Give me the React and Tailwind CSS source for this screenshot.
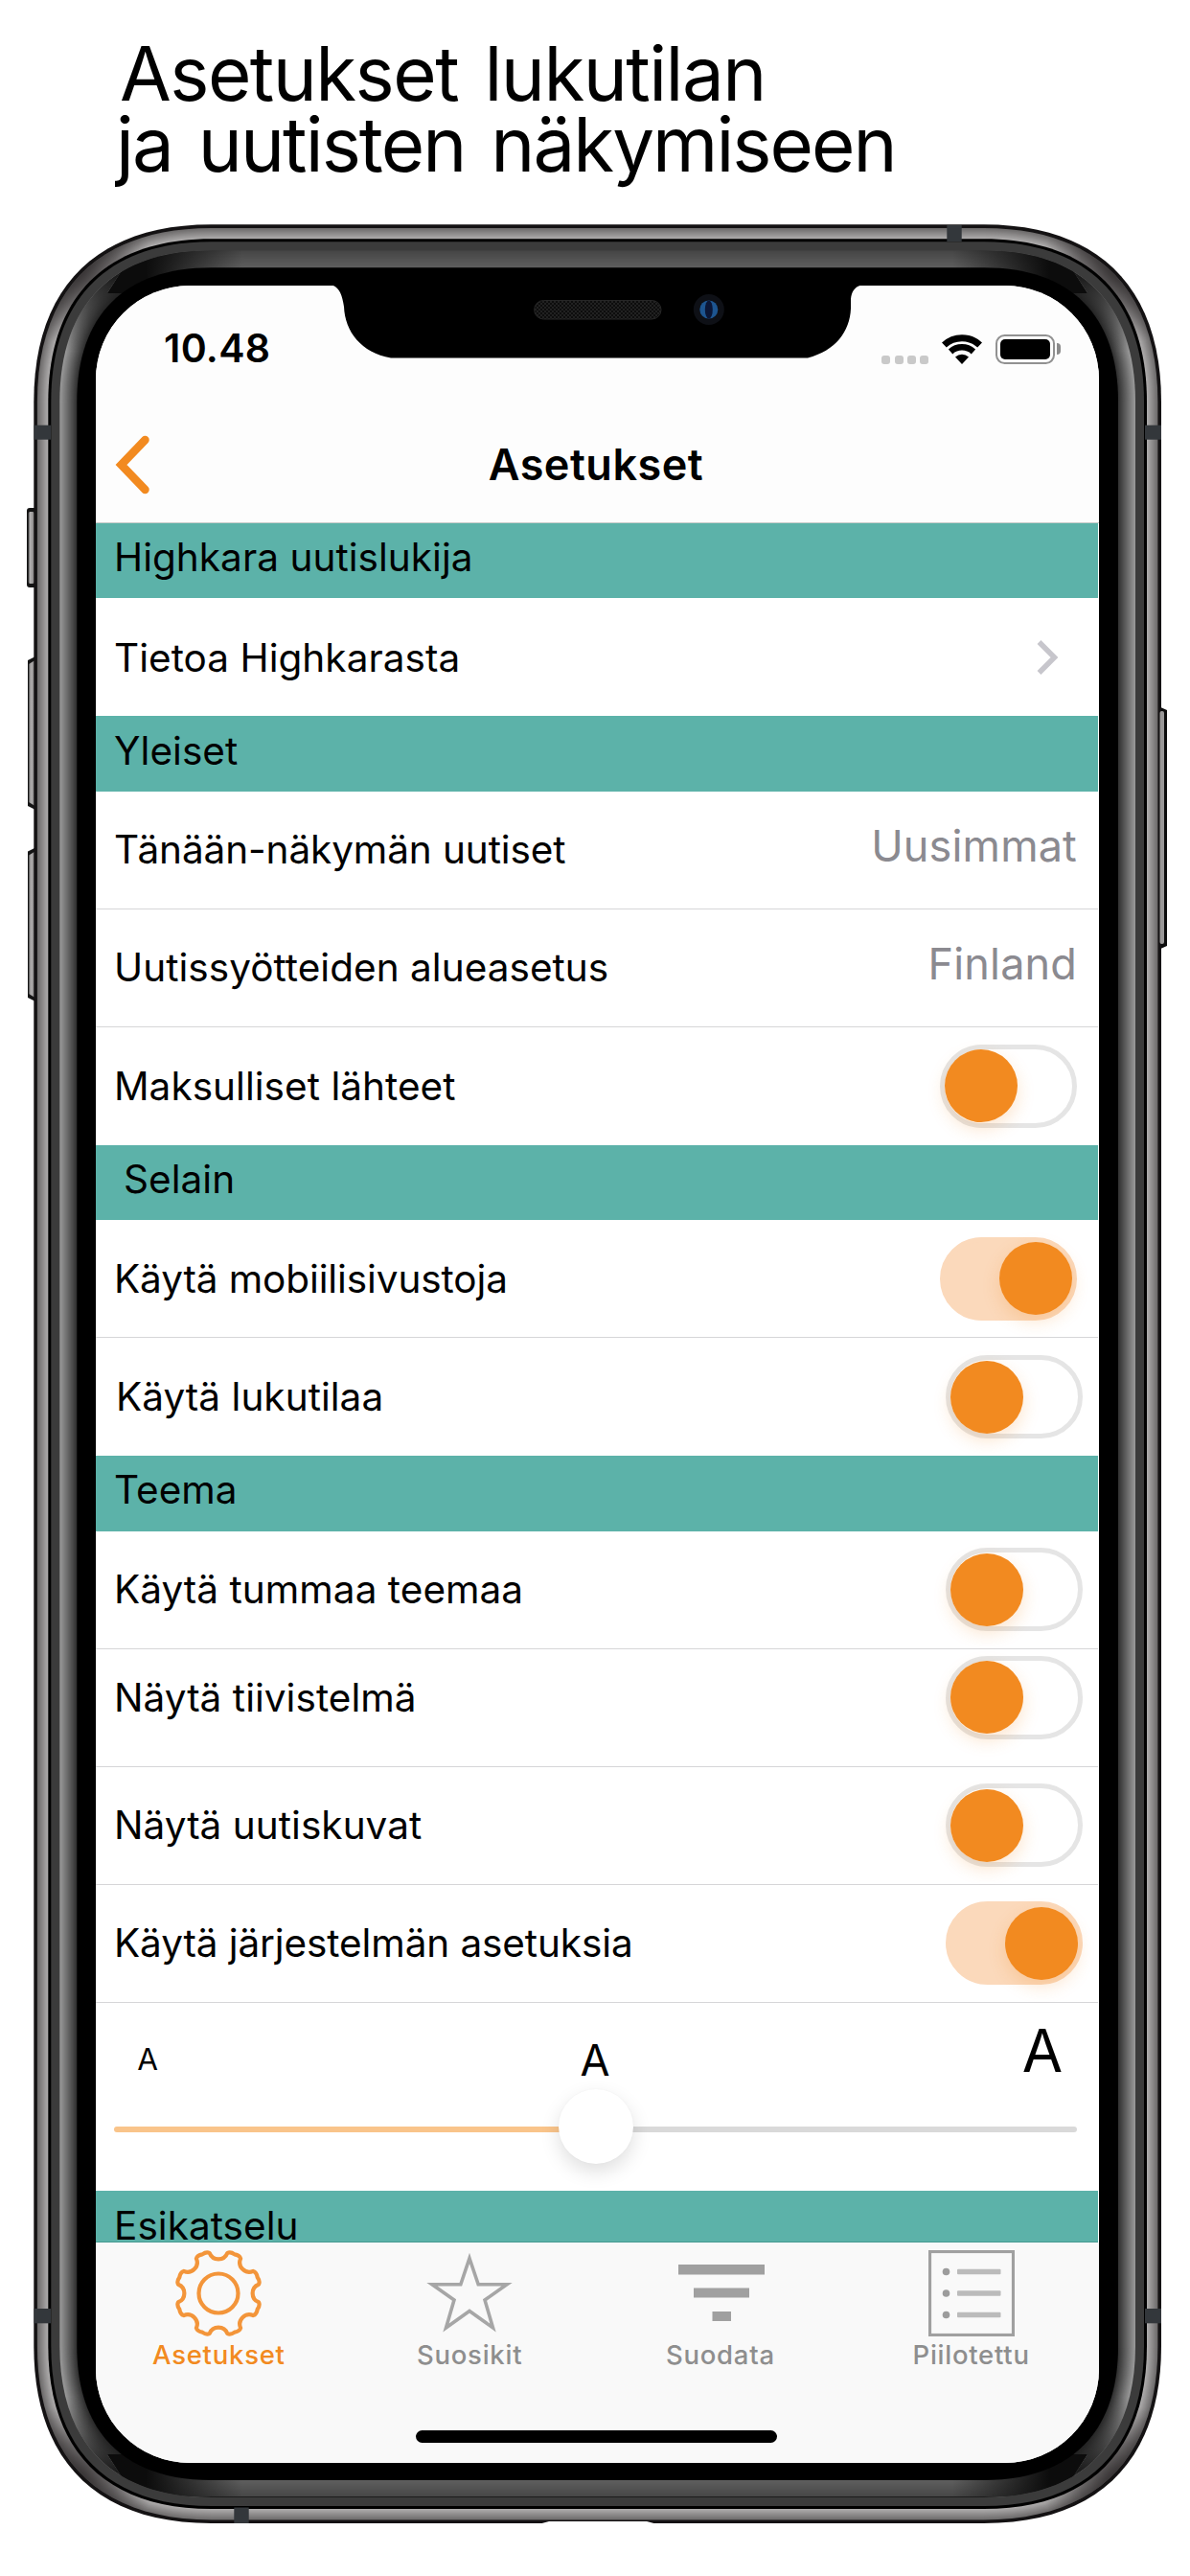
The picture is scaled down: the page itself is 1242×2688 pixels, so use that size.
import React from "react";

/* ---------- phone body drawing ---------- */

const BODY = { left: 35.3, top: 234.3, right: 1212, bottom: 2633 };

function shell(d) {
  const l = BODY.left + d;
  const t = BODY.top + d;
  const r = BODY.right - d;
  const b = BODY.bottom - d;
  const c = 185 - d;
  const k = c * 0.355;
  return [
    `M${l + c} ${t}H${r - c}`,
    `C${r - k} ${t} ${r} ${t + k} ${r} ${t + c}`,
    `V${b - c}`,
    `C${r} ${b - k} ${r - k} ${b} ${r - c} ${b}`,
    `H${l + c}`,
    `C${l + k} ${b} ${l} ${b - k} ${l} ${b - c}`,
    `V${t + c}`,
    `C${l} ${t + k} ${l + k} ${t} ${l + c} ${t}Z`,
  ].join("");
}

const grey = (v, warm = 0) => `rgb(${Math.round(v + warm)},${Math.round(v)},${Math.round(v)})`;

const RIM = Array.from({ length: 12 }, (_, i) => ({ d: 3.6 + i, fill: grey(108 + i * 6, 2) }));
const SIDE = Array.from({ length: 19 }, (_, i) => ({ d: 27 + i, fill: grey(152 - i * 6) }));
const CAP = Array.from({ length: 19 }, (_, i) => ({ d: 27 + i, fill: grey(70 + i * 1.4) }));

const corners = [
  [80, 280],
  [1167, 280],
  [80, 2588],
  [1167, 2588],
];

function PhoneBody() {
  return (
    <svg className="absolute left-0 top-0 h-[2454px] w-[1242px]" viewBox="0 234 1242 2454">
      <defs>
        <radialGradient id="cornerShade">
          <stop offset="0" stopColor="#2b2728" stopOpacity="0.85" />
          <stop offset="0.5" stopColor="#2b2728" stopOpacity="0.5" />
          <stop offset="1" stopColor="#2b2728" stopOpacity="0" />
        </radialGradient>
        <linearGradient id="capShade">
          <stop offset="0.08" stopColor="#0c0c0c" />
          <stop offset="0.17" stopColor="#0c0c0c" stopOpacity="0" />
          <stop offset="0.83" stopColor="#0c0c0c" stopOpacity="0" />
          <stop offset="0.92" stopColor="#0c0c0c" />
        </linearGradient>
        <linearGradient id="sideShade" x2="0" y2="1">
          <stop offset="0.012" stopColor="#1c1c1c" />
          <stop offset="0.045" stopColor="#1c1c1c" stopOpacity="0" />
          <stop offset="0.955" stopColor="#1c1c1c" stopOpacity="0" />
          <stop offset="0.988" stopColor="#1c1c1c" />
        </linearGradient>
        <linearGradient id="key" x2="1">
          <stop offset="0" stopColor="#4a4a4a" />
          <stop offset="0.3" stopColor="#b0aeae" />
          <stop offset="0.6" stopColor="#a09e9e" />
          <stop offset="1" stopColor="#7c7a7a" />
        </linearGradient>
        <clipPath id="caps">
          <path d="M140 262H1107L1135 306H112ZM140 2605H1107L1135 2561H112Z" />
          <path d="M150 234H1092V262H1107V308H140V262H150ZM150 2640H1092V2605H140V2560H1107V2605H1092Z" />
        </clipPath>
        <pattern id="mesh" width="4" height="4" patternUnits="userSpaceOnUse">
          <rect width="4" height="4" fill="#0d0d0d" />
          <circle cx="1" cy="1" r="0.9" fill="#2b2b2b" />
          <circle cx="3" cy="3" r="0.9" fill="#2b2b2b" />
        </pattern>
      </defs>

      <rect x="28" y="530" width="12" height="83" rx="3" fill="#141414" />
      <rect x="29.500" y="534" width="6.500" height="75" rx="2" fill="url(#key)" />
      <path d="M29 689L37 685V845L29 841Z" fill="#141414" />
      <path d="M30 693L36.500 689V841L30 837Z" fill="url(#key)" />
      <path d="M29 888.500L37 884.500V1045L29 1041Z" fill="#141414" />
      <path d="M30 892.500L36.500 888.500V1041L30 1037Z" fill="url(#key)" />
      <path d="M1209 737L1218 741V987L1209 991Z" fill="#0c0c0c" />
      <path d={shell(0)} fill="#141213" />
      {RIM.map((r) => (
        <path key={r.d} d={shell(r.d)} fill={r.fill} />
      ))}
      <clipPath id="rimArea">
        <path d={shell(3.6)} />
      </clipPath>
      <g clipPath="url(#rimArea)">
        {corners.map(([x, y]) => (
          <circle key={`${x}-${y}`} cx={x} cy={y} r="80" fill="url(#cornerShade)" />
        ))}
      </g>
      <path d={shell(15)} fill="#000" />
      <path d={shell(18)} fill="#3b3b3b" />
      {SIDE.map((r) => (
        <path key={r.d} d={shell(r.d)} fill={r.fill} />
      ))}
      <path d={shell(27)} fill="url(#sideShade)" />
      <g clipPath="url(#caps)">
        {CAP.map((r) => (
          <path key={r.d} d={shell(r.d)} fill={r.fill} />
        ))}
        <path d={shell(27)} fill="url(#capShade)" />
      </g>
      <path d={shell(45)} fill="#000" />
      <rect x="1210.500" y="742" width="4.500" height="243" rx="2" fill="#9a9898" />

      <g fill="#33373b">
        <rect x="988.300" y="235" width="15.400" height="17" />
        <rect x="35.500" y="443.700" width="17.500" height="15" />
        <rect x="1195" y="443.700" width="17" height="15" />
        <rect x="35.500" y="2409" width="17.500" height="15.300" />
        <rect x="1195" y="2409" width="17" height="15.300" />
        <rect x="244.300" y="2616.500" width="15.400" height="16.500" />
      </g>
      <path d="M562 2634L573 2631H675L686 2634Z" fill="#fff" />
    </svg>
  );
}

function Notch() {
  return (
    <svg className="absolute left-[244px] top-0 h-[78px] w-[560px]" viewBox="344 298 560 78">
      <path
        d="M344 297C353 298 357 306 359 320C360 346 377 368 408 373.500H843C872 366 887 346 888 322V312C889 302 894 298 902 297Z"
        fill="#000"
      />
      <rect x="557.600" y="313.500" width="132.400" height="19.500" rx="9.700" fill="url(#mesh)" stroke="#262626" />
      <circle cx="739.800" cy="323" r="16" fill="#0e1016" />
      <circle cx="739.800" cy="323" r="9.500" fill="#1d5590" />
      <ellipse cx="739.800" cy="323" rx="4" ry="9.500" fill="#0b1636" />
    </svg>
  );
}

/* ---------- status bar ---------- */

function StatusBar() {
  return (
    <div className="flex h-[132px] items-center pl-[71px] pr-[40px]">
      <span className="text-[41px] font-semibold tracking-[0.3px]">10.48</span>
      <div className="ml-auto flex items-center">
        <div className="mt-[22px] flex gap-[4.200px]">
          <i className="size-[9px] rounded-[3px] bg-[#c9c9c9]" />
          <i className="size-[9px] rounded-[3px] bg-[#c9c9c9]" />
          <i className="size-[9px] rounded-[3px] bg-[#c9c9c9]" />
          <i className="size-[9px] rounded-[3px] bg-[#c9c9c9]" />
        </div>
        <svg className="ml-[14px] h-[31px] w-[42px]" viewBox="0 0 42 31" fill="none" stroke="#000">
          <path d="M2.400 11A27.300 27.300 0 0 1 39.600 11" strokeWidth="7" />
          <path d="M9.100 18A17.600 17.600 0 0 1 32.900 18" strokeWidth="6.500" />
          <path d="M21 31L14 23.600A10.300 10.300 0 0 1 28 23.600Z" fill="#000" stroke="none" />
        </svg>
        <div className="ml-[14px] h-[31px] w-[61.500px] rounded-[9.500px] border-[2.500px] border-[#919191] p-[3px]">
          <div className="h-full rounded-[5px] bg-black" />
        </div>
        <div className="ml-[2px] h-[12px] w-[4.500px] rounded-r-full bg-[#8b8b8b]" />
      </div>
    </div>
  );
}

function NavBar() {
  return (
    <div className="grid h-[109px] grid-cols-[1fr_auto_1fr] items-center pr-[3px]">
      <svg className="ml-[20px] h-[62px] w-[38px]" viewBox="0 0 38 62" fill="none">
        <path d="M31.500 5L6.500 31L31.500 57" stroke="#f28a20" strokeWidth="8.500" strokeLinecap="round" />
      </svg>
      <h2 className="text-[45px] font-semibold tracking-[0.500px]">Asetukset</h2>
      <span />
    </div>
  );
}

/* ---------- list ---------- */

function SectionTitle({ children, indent = "pl-[19px]" }) {
  return (
    <div className={`flex h-[78.400px] shrink-0 items-center bg-[#5cb2a9] pb-[5px] ${indent}`}>{children}</div>
  );
}

function Row({ label, children, last, tight, indent = "pl-[19px]", end = "pr-[22px]", raised }) {
  return (
    <div
      className={`flex h-[123px] shrink-0 items-center justify-between ${indent} ${end} ${
        last ? "" : "border-b border-[#d6d6d8]"
      } ${raised ? "pb-[21px]" : ""}`}
    >
      <span className={`pt-[2px] ${tight ? "tracking-[-0.100px]" : ""}`}>{label}</span>
      {children}
    </div>
  );
}

function Value({ children }) {
  return <span className="pb-[8px] text-[45px] tracking-[0.150px] text-[#8b8a90]">{children}</span>;
}

function Toggle({ on }) {
  return (
    <div
      className={`flex h-[87px] w-[143px] items-center rounded-full border-[5px] ${
        on ? "justify-end border-[#fbd9bb] bg-[#fbd9bb]" : "border-[#e5e5e5] bg-white"
      }`}
    >
      <div className="size-[76px] rounded-full bg-[#f28a20] shadow-[0_7px_18px_rgba(242,138,32,0.22)]" />
    </div>
  );
}

function TextSize() {
  return (
    <div className="h-[196.800px] shrink-0">
      <div className="flex h-[90.500px] justify-between pl-[24px] pr-[28px] text-center leading-[40px] tracking-normal">
        <span className="mt-[39px] w-[60px] text-[31.500px]">A</span>
        <span className="mt-[40px] w-[60px] text-[45px]">A</span>
        <span className="mt-[30px] w-[60px] text-[61.500px]">A</span>
      </div>
      <div className="relative ml-[19px] flex h-[78px] w-[1005px] items-center pt-[6px]">
        <div className="h-[5.500px] w-1/2 rounded-l-full bg-[#f9c48a]" />
        <div className="h-[5.500px] w-1/2 rounded-r-full bg-[#d9d9d9]" />
        <div className="absolute left-[463.500px] top-0 size-[78px] rounded-full bg-white shadow-[0_8px_20px_rgba(0,0,0,0.13),0_0_2px_rgba(0,0,0,0.04)]" />
      </div>
    </div>
  );
}

/* ---------- tab bar ---------- */

function gearPath() {
  const pt = (deg, r) => {
    const a = (deg * Math.PI) / 180;
    return `${(45 + r * Math.sin(a)).toFixed(2)} ${(45 - r * Math.cos(a)).toFixed(2)}`;
  };
  let d = `M${pt(-12.5, 43)}`;
  for (let i = 0; i < 8; i++) {
    const a = i * 45;
    d += `A10 10 0 0 0 ${pt(a + 12.5, 43)}`;
    d += `Q${pt(a + 16, 45.5)} ${pt(a + 22.5, 44)}Q${pt(a + 29, 45.5)} ${pt(a + 32.5, 43)}`;
  }
  return d + "Z";
}

function GearIcon() {
  return (
    <svg className="size-[90px] overflow-visible" viewBox="0 0 90 90" fill="none" stroke="#f3953a" strokeWidth="4.200" strokeLinejoin="round">
      <path d={gearPath()} />
      <circle cx="45" cy="45" r="20.500" />
    </svg>
  );
}

function StarIcon() {
  return (
    <svg className="size-[90px]" viewBox="0 0 90 90" fill="none" stroke="#a6a6a6" strokeWidth="3.600" strokeMiterlimit="10">
      <path d="M45 8.500L54.200 35.800H84L61 52L69.500 81L45 63.500L20.500 81L29 52L6 35.800H35.800Z" />
    </svg>
  );
}

function FilterIcon() {
  return (
    <svg className="ml-[2px] size-[90px]" viewBox="0 0 90 90" fill="#a0a0a0">
      <rect x="0" y="15" width="90" height="10.500" />
      <rect x="16" y="39.500" width="58" height="10" />
      <rect x="35.500" y="64" width="19.500" height="10" />
    </svg>
  );
}

function ListIcon() {
  return (
    <svg className="size-[90px]" viewBox="0 0 90 90">
      <rect x="1.500" y="1.500" width="87" height="87" fill="none" stroke="#a0a0a0" strokeWidth="3.200" />
      {[22.5, 45, 67.5].map((y) => (
        <g key={y}>
          <circle cx="18.500" cy={y} r="3.800" fill="#9c9c9c" />
          <rect x="30" y={y - 2.8} width="45.500" height="5.600" rx="1" fill="#bbb" />
        </g>
      ))}
    </svg>
  );
}

const TABS = [
  { label: "Asetukset", Icon: GearIcon, active: true },
  { label: "Suosikit", Icon: StarIcon },
  { label: "Suodata", Icon: FilterIcon },
  { label: "Piilotettu", Icon: ListIcon },
];

function TabBar() {
  return (
    <nav className="flex h-[230px] flex-col items-center bg-[#f9f9f9]">
      <div className="-ml-[5px] grid h-[196px] w-[1047px] grid-cols-4">
        {TABS.map(({ label, Icon, active }) => (
          <div key={label} className="flex flex-col items-center pt-[8px]">
            <Icon />
            <span
              className={`mt-[4px] text-[27.500px] font-medium leading-[30px] tracking-[0.750px] ${
                active ? "text-[#f28a20]" : "text-[#8e8e8e]"
              }`}
            >
              {label}
            </span>
          </div>
        ))}
      </div>
      <div className="-ml-[2px] h-[13px] w-[377px] rounded-full bg-black" />
    </nav>
  );
}

export default function App() {
  return (
    <main className="h-[2688px] w-[1242px] overflow-hidden bg-white font-['Inter',sans-serif] text-black">
      <h1 className="flex h-[234px] flex-col pl-[125px] pt-[40px] text-[78px] leading-[74px]">
        <span className="tracking-[-1.550px] [word-spacing:7px]">Asetukset lukutilan</span>
        <span className="-ml-[4px] tracking-[-1.950px] [word-spacing:7px]">ja uutisten näkymiseen</span>
      </h1>

      <div className="relative h-[2454px] pl-[100px] pt-[64px]">
        <PhoneBody />
        <div className="relative flex h-[2272px] w-[1047px] flex-col overflow-hidden rounded-[98px] bg-white">
          <header className="h-[248px] shrink-0 border-b border-[#c9cccb] bg-[#fdfdfd]">
            <StatusBar />
            <NavBar />
          </header>

          <div className="mr-px flex h-[1794px] shrink-0 flex-col overflow-hidden border-b border-[#469a91] text-[40.500px] tracking-[0.040px]">
            <SectionTitle>Highkara uutislukija</SectionTitle>
            <Row label="Tietoa Highkarasta" last end="pr-[40px]">
              <svg className="h-[38px] w-[24px]" viewBox="0 0 24 38" fill="none">
                <path d="M2.500 3L18.500 19L2.500 35" stroke="#c7c6cc" strokeWidth="5.500" />
              </svg>
            </Row>
            <SectionTitle>Yleiset</SectionTitle>
            <Row label="Tänään-näkymän uutiset" tight>
              <Value>Uusimmat</Value>
            </Row>
            <Row label="Uutissyötteiden alueasetus">
              <Value>Finland</Value>
            </Row>
            <Row label="Maksulliset lähteet" last>
              <Toggle />
            </Row>
            <SectionTitle indent="pl-[29px]">Selain</SectionTitle>
            <Row label="Käytä mobiilisivustoja" tight>
              <Toggle on />
            </Row>
            <Row label="Käytä lukutilaa" last indent="pl-[21px]" end="pr-[16px]">
              <Toggle />
            </Row>
            <SectionTitle>Teema</SectionTitle>
            <Row label="Käytä tummaa teemaa" end="pr-[16px]">
              <Toggle />
            </Row>
            <Row label="Näytä tiivistelmä" end="pr-[16px]" raised>
              <Toggle />
            </Row>
            <Row label="Näytä uutiskuvat" end="pr-[16px]">
              <Toggle />
            </Row>
            <Row label="Käytä järjestelmän asetuksia" end="pr-[16px]" tight>
              <Toggle on />
            </Row>
            <TextSize />
            <SectionTitle>Esikatselu</SectionTitle>
          </div>

          <TabBar />
          <Notch />
        </div>
      </div>
    </main>
  );
}
